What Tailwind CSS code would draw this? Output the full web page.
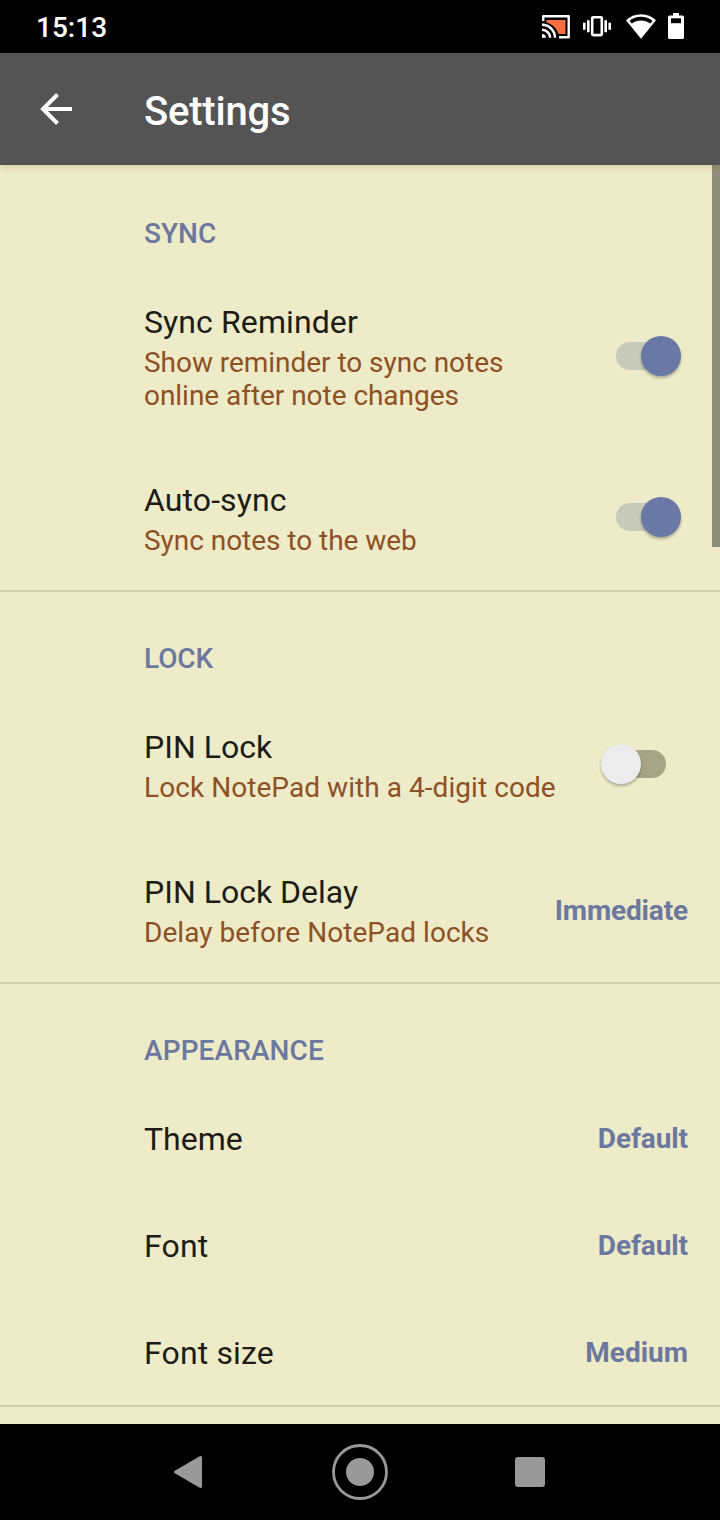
<!DOCTYPE html>
<html lang="en"><head><meta charset="utf-8"><title>Settings</title>
<script src="https://cdn.jsdelivr.net/npm/@tailwindcss/browser@4"></script></head>
<body class="w-[720px] h-[1520px] overflow-hidden flex flex-col bg-[#eeebc8] font-[Roboto,sans-serif] text-[28px] leading-[33px]">
<div class="h-[53px] shrink-0 bg-black text-white flex items-center justify-between pl-9 pr-9">
  <span class="font-medium pt-px">15:13</span>
  <div class="flex items-center">
    <svg class="w-7 h-6" viewBox="0 0 28 24" fill="none"><path d="M4.5 5H23.5V19H16.5C14.5 13.5 10.5 9 4.5 7.5Z" fill="#f8703f"/><path d="M1.2 6V1.3H26.7V22.2H17" stroke="#fff" stroke-width="2.400" stroke-linejoin="round"/><path d="M0 9.7A13 13 0 0 1 13 22.8M0 14.7A8.2 8.2 0 0 1 8.2 22.8" stroke="#fff" stroke-width="2.500"/><path d="M0 19A4 4 0 0 1 4 22.8H0Z" fill="#fff"/></svg>
    <svg class="w-7 h-6 ml-[13px]" viewBox="0 0 28 24" fill="none" stroke="#fff" stroke-width="2.600"><rect x="9.2" y="2.300" width="9.6" height="17.8" rx="1"/><path d="M5.3 5.200V17.200M1.3 7.700V14.700M22.700 5.200V17.200M26.700 7.700V14.700"/></svg>
    <svg class="w-[30px] h-[26px] ml-[15px]" viewBox="0 0 30 26"><path d="M15 .2C9.200 .2 4 2.400 0 6.200L15 24.800 30 6.200C26 2.400 20.800 .2 15 .2Z" fill="#fff"/><path d="M3.500 6.700C10 1.500 20 1.500 26.500 6.700L24.300 9.500C18.500 5.400 11.500 5.400 5.700 9.500Z" fill="#000"/></svg>
    <svg class="w-4 h-[27px] ml-3" viewBox="0 0 16 27"><path d="M5 0H11V2.500H14.500Q16 2.500 16 4V24.500Q16 26 14.500 26H1.500Q0 26 0 24.500V4Q0 2.500 1.500 2.500H5Z" fill="#fff"/><path d="M3 5.300H13V10.200H3Z" fill="#000"/></svg>
  </div>
</div>
<header class="h-28 shrink-0 bg-[#545454] text-white flex items-center pl-10 z-10 shadow-[0_2px_6px_rgba(120,90,30,0.22)]">
  <svg class="w-8 h-8" viewBox="0 0 32 32" fill="none" stroke="#fff" stroke-width="4"><path d="M32 16H3M17.500 1.500L3 16L17.500 30.500"/></svg>
  <h1 class="ml-[72px] pt-1.5 text-[40px] leading-[48px] font-medium tracking-[-0.2px]">Settings</h1>
</header>
<main class="relative flex-1 overflow-hidden text-[#8f5024]">
  <div class="absolute right-0 top-0 w-2 h-[382px] bg-[#8f8e78]"></div>
  <section class="border-b-2 border-[#d2cfaf]">
    <h2 class="h-[103px] pt-[52px] pl-36 font-medium text-[#6b789f]">SYNC</h2>
    <div class="h-[178px] pl-36 pr-[54px] flex items-center justify-between">
      <div><p class="text-[32px] leading-10 text-[#1d1c17] tracking-[0.1px]">Sync Reminder</p><p class="mt-1 tracking-[-0.04px]">Show reminder to sync notes<br>online after note changes</p></div>
      <div class="relative w-[50px] h-7 rounded-full bg-[#c8cabb] mb-0.5"><span class="absolute left-[25px] -top-1.5 size-10 rounded-full bg-[#6978a5] shadow-[0_2px_3px_rgba(0,0,0,0.28)]"></span></div>
    </div>
    <div class="h-36 pl-36 pr-[54px] pt-px flex items-center justify-between">
      <div><p class="text-[32px] leading-10 text-[#1d1c17] tracking-[0.1px]">Auto-sync</p><p class="mt-1 tracking-[-0.04px]">Sync notes to the web</p></div>
      <div class="relative w-[50px] h-7 rounded-full bg-[#c8cabb] mb-[3px]"><span class="absolute left-[25px] -top-1.5 size-10 rounded-full bg-[#6978a5] shadow-[0_2px_3px_rgba(0,0,0,0.28)]"></span></div>
    </div>
  </section>
  <section class="border-b-2 border-[#d2cfaf]">
    <h2 class="h-[101px] pt-[50px] pl-36 font-medium text-[#6b789f] tracking-[-0.1px]">LOCK</h2>
    <div class="h-[145px] pl-36 pr-[54px] flex items-center justify-between">
      <div><p class="text-[32px] leading-10 text-[#1d1c17]">PIN Lock</p><p class="mt-1 tracking-[0.06px]">Lock NotePad with a 4-digit code</p></div>
      <div class="relative w-[50px] h-7 rounded-full bg-[#a6a485] mb-[3px]"><span class="absolute -left-[15px] -top-1.5 size-10 rounded-full bg-[#ececec] shadow-[0_2px_3px_rgba(0,0,0,0.28)]"></span></div>
    </div>
    <div class="h-36 pl-36 pr-8 pt-px flex items-center justify-between">
      <div><p class="text-[32px] leading-10 text-[#1d1c17]">PIN Lock Delay</p><p class="mt-1 tracking-[0.05px]">Delay before NotePad locks</p></div>
      <span class="font-bold text-[#6b789f] tracking-[-0.15px]">Immediate</span>
    </div>
  </section>
  <section class="border-b-2 border-[#d2cfaf]">
    <h2 class="h-[101px] pt-[50px] pl-36 font-medium text-[#6b789f] tracking-[0.1px]">APPEARANCE</h2>
    <div class="h-[107px] pl-36 pr-8 flex items-center justify-between"><p class="text-[32px] leading-10 text-[#1d1c17]">Theme</p><span class="font-bold text-[#6b789f] tracking-[-0.1px]">Default</span></div>
    <div class="h-[107px] pl-36 pr-8 flex items-center justify-between"><p class="text-[32px] leading-10 text-[#1d1c17] tracking-[0.15px]">Font</p><span class="font-bold text-[#6b789f] tracking-[-0.1px]">Default</span></div>
    <div class="h-[106px] pl-36 pr-8 pt-px flex items-center justify-between"><p class="text-[32px] leading-10 text-[#1d1c17] tracking-[0.15px]">Font size</p><span class="font-bold text-[#6b789f]">Medium</span></div>
  </section>
</main>
<nav class="h-24 shrink-0 bg-black flex items-center justify-between pl-[174px] pr-[175px]">
  <svg class="w-7 h-8" viewBox="0 0 28 32"><path d="M1.500 16L26.500 1.500V30.500Z" fill="#999" stroke="#999" stroke-width="3" stroke-linejoin="round"/></svg>
  <svg class="size-14 ml-[3px]" viewBox="0 0 56 56"><circle cx="28" cy="28" r="26.500" fill="none" stroke="#999" stroke-width="2.800"/><circle cx="28" cy="28" r="14" fill="#999"/></svg>
  <div class="size-[30px] rounded-[3px] bg-[#999]"></div>
</nav>
</body></html>
